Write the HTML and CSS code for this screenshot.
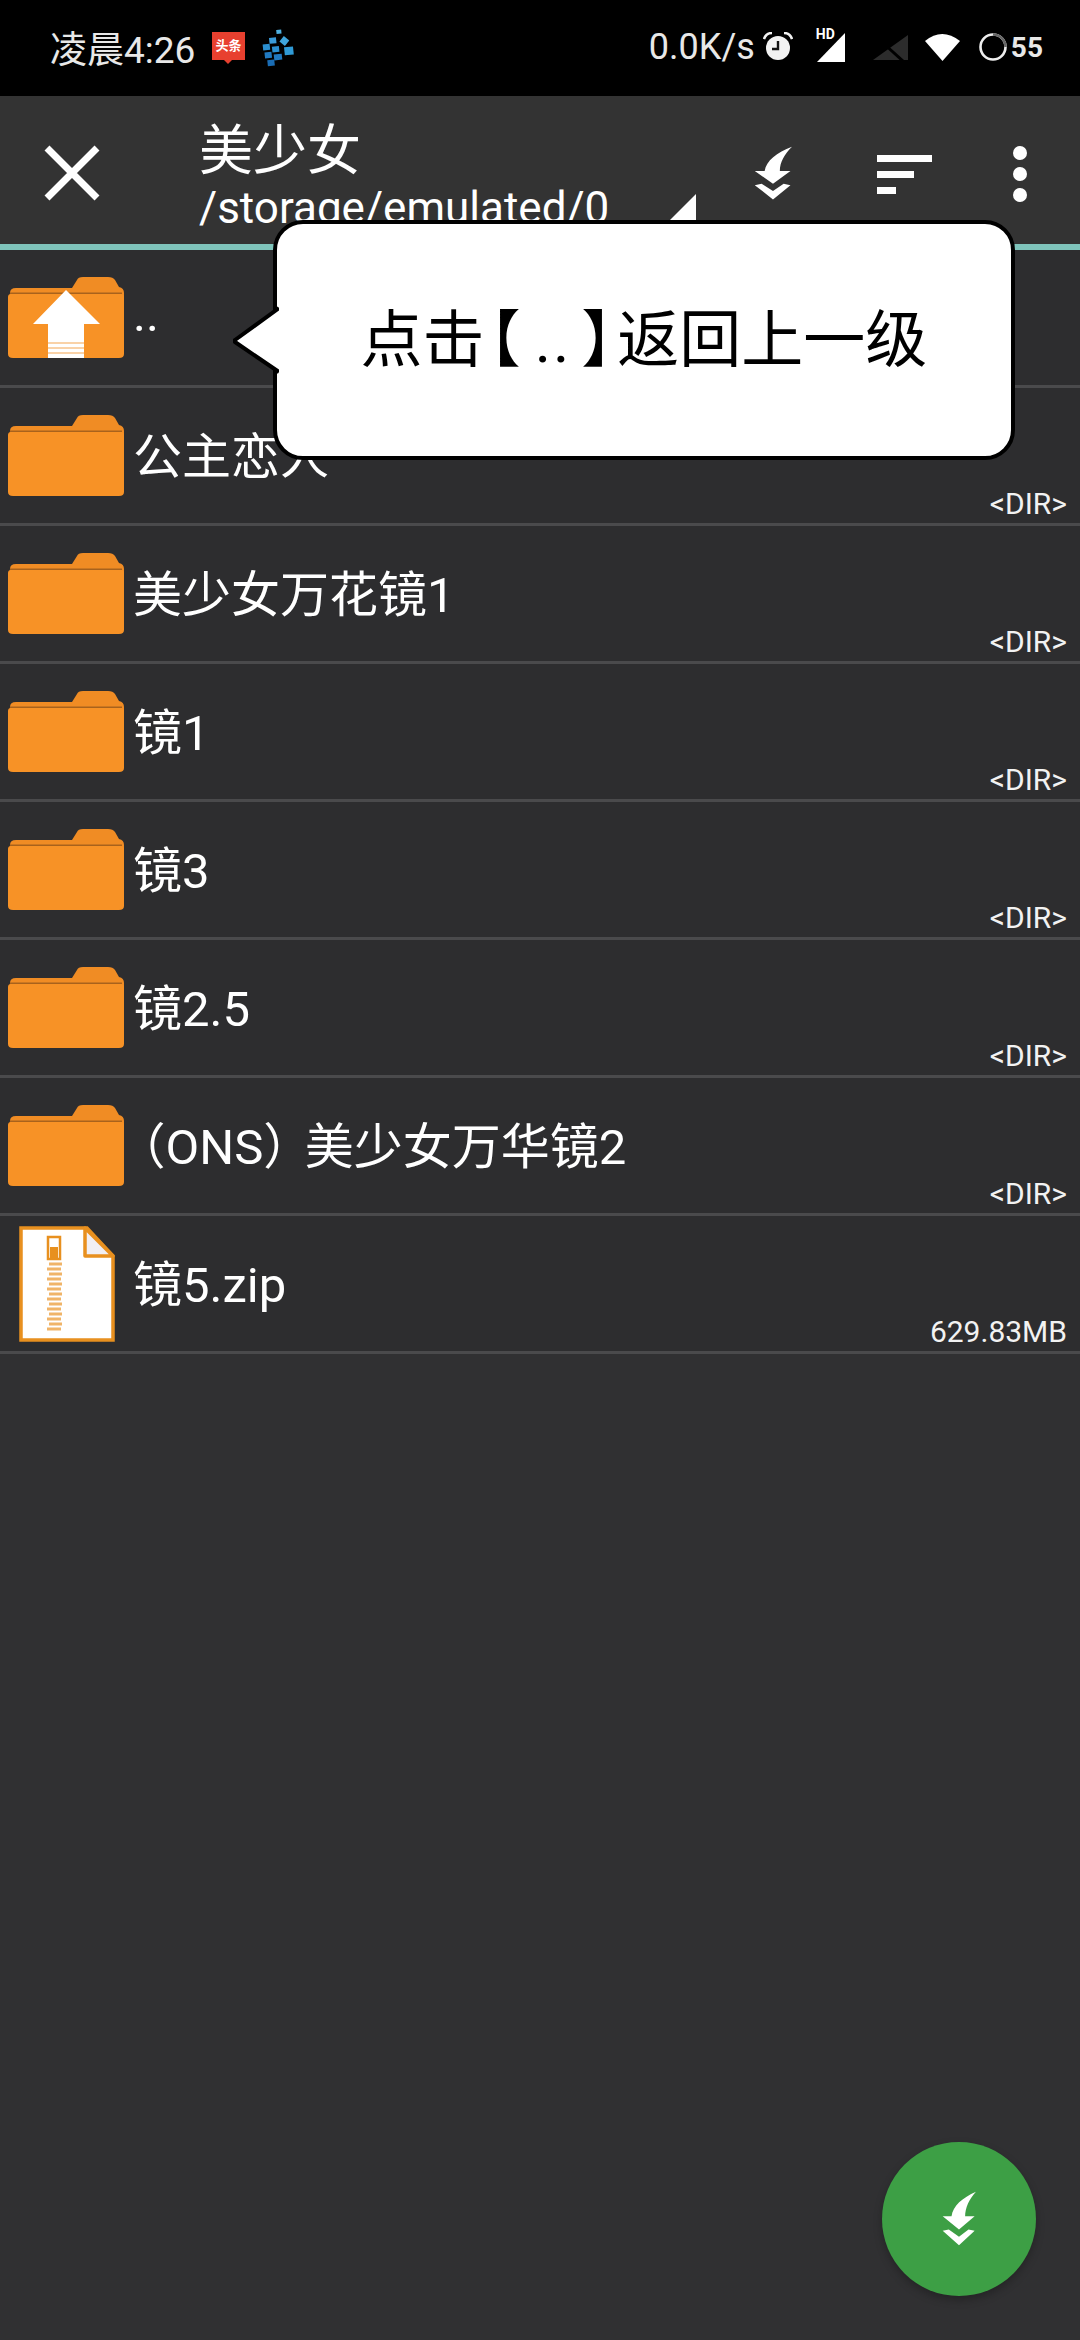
FILE: index.html
```html
<!DOCTYPE html>
<html lang="zh">
<head>
  <meta charset="UTF-8">
  <meta name="viewport" content="width=device-width, initial-scale=1.0">
  <title>文件浏览</title>
  <link rel="stylesheet" href="styles.css">
</head>
<body>
  <svg class="defs" width="0" height="0">
    <symbol id="folder" viewBox="0 0 116 82">
      <path d="M2 16 Q2 11 8 11 L64 11 L69 3 Q70 0 75 0 L100 0 Q105 0 107 3 L111 10 Q116 11 116 16 L116 30 L0 30 Z" fill="#f08c24"/>
      <path d="M0 20 Q0 17 3 17 L113 17 Q116 17 116 20 L116 77 Q116 81 111 81 L5 81 Q0 81 0 77 Z" fill="#f79226"/>
      <rect x="2" y="15.5" width="112" height="1.5" fill="#a8621c"/>
    </symbol>
    <symbol id="swoop" viewBox="620 435 100 170" preserveAspectRatio="none">
      <path d="M720 437 C680 455 652 480 648 512 L622 512 L670 552 L716 512 L688 512 C688 485 700 460 720 437 Z" fill="#fff"/>
      <path d="M622 556 L640 552 L670 574 L698 552 L716 556 L670 600 Z" fill="#fff"/>
    </symbol>
  </svg>

  <!-- barra di stato -->
  <div class="status-bar">
    <span class="status-time">凌晨4:26</span>
    <div class="app-news"><span>头条</span></div>
    <svg class="app-grid" viewBox="0 0 36 37">
      <g fill="#2b8fd0">
        <rect x="18" y="1" width="5" height="4" fill="#4fb0e0"/>
        <rect x="10" y="8" width="7" height="6" fill="#3a9ad8"/>
        <rect x="22" y="9" width="7" height="7" transform="rotate(45 25 12)" fill="#3fa5dc"/>
        <rect x="3" y="14" width="7" height="6"/>
        <rect x="12" y="17" width="7" height="6"/>
        <rect x="24" y="19" width="9" height="8" fill="#2f9ad6"/>
        <rect x="4" y="22" width="7" height="6" fill="#2079c0"/>
        <rect x="13" y="25" width="8" height="6" fill="#2079c0"/>
        <rect x="6" y="30" width="7" height="6" fill="#1a6cb4"/>
      </g>
    </svg>
    <span class="status-speed">0.0K/s</span>
    <svg class="st-alarm" viewBox="0 0 30 30">
      <circle cx="15" cy="16" r="12" fill="#f2f2f2"/>
      <path d="M15 9 V17 H9" fill="none" stroke="#111" stroke-width="2.4"/>
      <path d="M1 7 Q3 1 9 1 M29 7 Q27 1 21 1" fill="none" stroke="#f2f2f2" stroke-width="2.5"/>
    </svg>
    <div class="st-signal">
      <span class="st-hd">HD</span>
      <svg width="29" height="29" viewBox="0 0 29 29"><path d="M0 29 L28 0 V29 Z" fill="#fff"/></svg>
    </div>
    <svg class="st-signal2" viewBox="0 0 35 27">
      <path d="M0 26 L35 1 V26 Z" fill="#2c2c2c"/>
      <path d="M10 9 L30 27" stroke="#000" stroke-width="3"/>
    </svg>
    <svg class="st-wifi" viewBox="0 0 35 28"><path d="M0 8 Q17 -6 35 8 L17.5 28 Z" fill="#fff"/></svg>
    <svg class="st-ring" viewBox="0 0 30 30">
      <circle cx="15" cy="15" r="12.5" fill="none" stroke="#eee" stroke-width="2.6"/>
      <path d="M15 2.5 A12.5 12.5 0 0 1 27.5 15" fill="none" stroke="#666" stroke-width="2.6"/>
    </svg>
    <span class="st-batt">55</span>
  </div>

  <!-- toolbar -->
  <div class="toolbar">
    <svg class="tb-close" viewBox="0 0 56 56">
      <path d="M3 3 L53 53 M53 3 L3 53" stroke="#fff" stroke-width="7"/>
    </svg>
    <div class="tb-titles">
      <div class="tb-title">美少女</div>
      <div class="tb-path">/storage/emulated/0</div>
    </div>
    <div class="tb-corner"></div>
    <svg class="tb-swoop"><use href="#swoop"/></svg>
    <div class="tb-sort">
      <span class="sort-a"></span>
      <span class="sort-b"></span>
      <span class="sort-c"></span>
    </div>
    <div class="tb-more">
      <span></span>
      <span></span>
      <span></span>
    </div>
  </div>

  <!-- lista file -->
  <div class="list">
    <div class="row">
      <svg class="ic-folder" viewBox="0 0 116 82">
        <use href="#folder" width="116" height="82"/>
        <path d="M58 13 L92 47 L76 47 L76 81 L40 81 L40 47 L25 47 Z" fill="#fff"/>
        <path d="M40 66 H76 M40 71 H76 M40 76 H76" stroke="#f8c48c" stroke-width="1.6"/>
      </svg>
      <span class="row-name">..</span>
    </div>
    <div class="row">
      <svg class="ic-folder"><use href="#folder"/></svg>
      <span class="row-name">公主恋人</span>
      <span class="row-size">&lt;DIR&gt;</span>
    </div>
    <div class="row">
      <svg class="ic-folder"><use href="#folder"/></svg>
      <span class="row-name">美少女万花镜1</span>
      <span class="row-size">&lt;DIR&gt;</span>
    </div>
    <div class="row">
      <svg class="ic-folder"><use href="#folder"/></svg>
      <span class="row-name">镜1</span>
      <span class="row-size">&lt;DIR&gt;</span>
    </div>
    <div class="row">
      <svg class="ic-folder"><use href="#folder"/></svg>
      <span class="row-name">镜3</span>
      <span class="row-size">&lt;DIR&gt;</span>
    </div>
    <div class="row">
      <svg class="ic-folder"><use href="#folder"/></svg>
      <span class="row-name">镜2.5</span>
      <span class="row-size">&lt;DIR&gt;</span>
    </div>
    <div class="row">
      <svg class="ic-folder"><use href="#folder"/></svg>
      <span class="row-name"><span class="paren-l">（</span>ONS<span class="paren-r">）</span>美少女万华镜2</span>
      <span class="row-size">&lt;DIR&gt;</span>
    </div>
    <div class="row">
      <svg class="ic-zip" viewBox="0 0 96 116">
        <path d="M2 2 H68 L94 30 V114 H2 Z" fill="#fff" stroke="#e8901f" stroke-width="3.5"/>
        <path d="M66 2 V30 H94 Z" fill="#f1eff4" stroke="#e8901f" stroke-width="3.5" stroke-linejoin="round"/>
        <rect x="29" y="11" width="12" height="22" fill="none" stroke="#e8901f" stroke-width="2.5"/>
        <rect x="31" y="21" width="8" height="11" fill="#e8901f"/>
        <path d="M30 38 H43 M28 43 H42 M30 48 H43 M28 53 H42 M30 58 H43 M28 63 H42 M30 68 H43 M28 73 H42 M30 78 H43 M28 83 H42 M30 88 H43 M28 93 H42 M30 98 H43 M28 103 H42" stroke="#f0b468" stroke-width="3"/>
      </svg>
      <span class="row-name">镜5.zip</span>
      <span class="row-size">629.83MB</span>
    </div>
  </div>

  <!-- fumetto -->
  <div class="bubble">
    <svg class="bubble-tail" viewBox="0 0 46 72">
      <path d="M46 4 L2 36 Q1 37 2 38 L46 68" fill="#fff" stroke="#000" stroke-width="4" stroke-linejoin="round"/>
    </svg>
    <span class="bubble-text">点击<span class="br-l">【</span><span class="br-dots">..</span><span class="br-r">】</span>返回上一级</span>
  </div>

  <div class="fab">
    <svg class="fab-icon"><use href="#swoop"/></svg>
  </div>
</body>
</html>
```

FILE: styles.css
```css
* {
  box-sizing: border-box;
}
html, body {
  margin: 0;
  padding: 0;
}
body {
  position: relative;
  width: 1080px;
  height: 2340px;
  overflow: hidden;
  display: flex;
  flex-direction: column;
  background-color: #303032;
  color: #fff;
  font-family: Roboto, "Noto Sans CJK SC", sans-serif;
}
.defs {
  position: absolute;
}

/* barra di stato */
.status-bar {
  height: 96px;
  background-color: #000;
  display: flex;
  align-items: center;
  padding: 0 37px 2px 50px;
  color: #e8e8e8;
}
.status-time {
  font-size: 37px;
  width: 162px;
}
.app-news {
  position: relative;
  width: 33px;
  height: 28px;
  margin-bottom: 2px;
  background-color: #e8402f;
  color: #fff;
  font-size: 13px;
  font-weight: bold;
  line-height: 28px;
  text-align: center;
}
.app-news::after {
  content: "";
  position: absolute;
  left: 12px;
  top: 28px;
  border: 4px solid transparent;
  border-top-color: #e8402f;
}
.app-grid {
  width: 36px;
  height: 37px;
  margin-left: 15px;
  transform: rotate(-6deg);
}
.status-speed {
  font-size: 36px;
  margin-left: auto;
  width: 111px;
}
.st-alarm {
  width: 30px;
  height: 30px;
  margin-left: 3px;
}
.st-signal {
  display: flex;
  position: relative;
  margin-left: 24px;
  width: 29px;
  height: 29px;
}
.st-hd {
  position: absolute;
  left: -1px;
  top: -7px;
  font-size: 14px;
  font-weight: bold;
  color: #fff;
}
.st-signal2 {
  width: 35px;
  height: 27px;
  margin-left: 27px;
}
.st-wifi {
  width: 35px;
  height: 28px;
  margin-left: 17px;
}
.st-ring {
  width: 30px;
  height: 30px;
  margin-left: 18px;
}
.st-batt {
  font-size: 28px;
  font-weight: 700;
  margin-left: 3px;
}

/* toolbar */
.toolbar {
  position: relative;
  height: 154px;
  flex: none;
  background-color: #333333;
  border-bottom: 6px solid #7fc4bb;
  display: flex;
  align-items: flex-start;
}
.tb-close {
  width: 56px;
  height: 56px;
  margin: 49px 0 0 44px;
  flex: none;
}
.tb-titles {
  margin-left: 99px;
  width: 431px;
  height: 148px;
  overflow: hidden;
}
.tb-title {
  font-size: 54px;
  line-height: 60px;
  margin-top: 26px;
}
.tb-path {
  font-size: 44px;
  line-height: 50px;
  margin-top: 1px;
  white-space: nowrap;
}
.tb-corner {
  width: 0;
  height: 0;
  margin: 98px 0 0 38px;
  border-left: 28px solid transparent;
  border-bottom: 28px solid #fff;
}
.tb-swoop {
  width: 38px;
  height: 55px;
  margin: 50px 0 0 58px;
}
.tb-sort {
  display: flex;
  flex-direction: column;
  gap: 9px;
  margin: 59px 0 0 85px;
  width: 56px;
}
.tb-sort span {
  display: block;
  height: 7px;
  background-color: #fff;
}
.sort-a { width: 55px; }
.sort-b { width: 37px; }
.sort-c { width: 19px; }
.tb-more {
  display: flex;
  flex-direction: column;
  gap: 7px;
  margin: 50px 0 0 80px;
}
.tb-more span {
  display: block;
  width: 14px;
  height: 14px;
  border-radius: 50%;
  background-color: #fff;
}

/* lista file */
.list {
  background-color: #2d2d2f;
}
.row {
  height: 138px;
  border-bottom: 3px solid #4a4a4c;
  display: flex;
  align-items: center;
  padding-right: 13px;
}
.ic-folder {
  width: 116px;
  height: 82px;
  margin-left: 8px;
  flex: none;
}
.ic-zip {
  width: 96px;
  height: 116px;
  margin-left: 19px;
  margin-right: 9px;
  flex: none;
}
.row-name {
  font-size: 49px;
  margin: 0 0 6px 9px;
  white-space: nowrap;
}
.paren-l,
.paren-r {
  font-feature-settings: "halt";
}
.paren-l {
  margin-left: 8px;
}
.paren-r {
  margin-right: 17px;
}
.row-size {
  margin-left: auto;
  align-self: flex-end;
  font-size: 30px;
  line-height: 34px;
  margin-bottom: 2px;
  color: #f2f2f2;
}

/* fumetto sopra la lista */
.bubble {
  position: absolute;
  left: 273px;
  top: 220px;
  width: 742px;
  height: 240px;
  background-color: #fff;
  border: 4px solid #000;
  border-radius: 30px;
  display: flex;
  align-items: center;
  justify-content: center;
  color: #000;
}
.bubble-tail {
  position: absolute;
  left: -44px;
  top: 80px;
  width: 46px;
  height: 72px;
}
.bubble-text {
  font-size: 62px;
  margin-bottom: 10px;
}
.br-l,
.br-r {
  font-feature-settings: "halt";
}
.br-l {
  margin-left: 5px;
}
.br-r {
  margin-right: 5px;
}
.br-dots {
  margin: 0 10px 0 14px;
  letter-spacing: 2px;
}

.fab {
  position: absolute;
  left: 882px;
  top: 2142px;
  width: 154px;
  height: 154px;
  border-radius: 50%;
  background-color: #3d9f45;
  box-shadow: 0 4px 8px rgba(0, 0, 0, 0.25);
  display: flex;
  align-items: center;
  justify-content: center;
}
.fab-icon {
  width: 34px;
  height: 56px;
}
```
